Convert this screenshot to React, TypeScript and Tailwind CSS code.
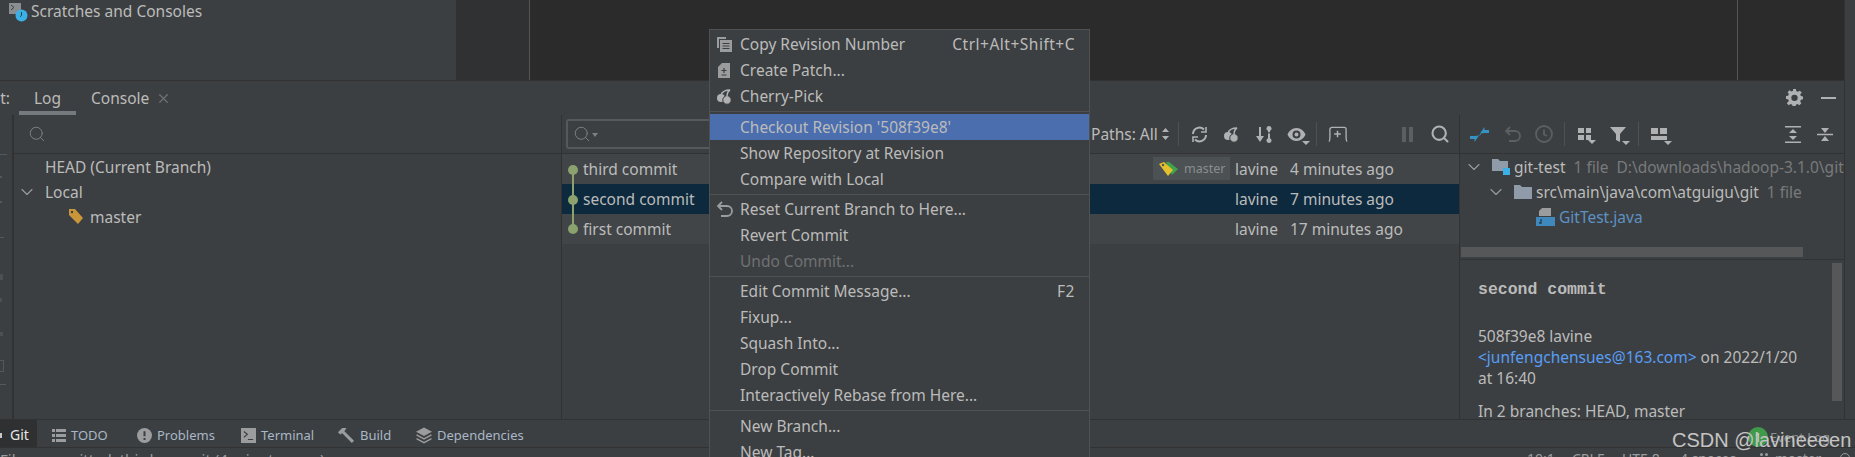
import React from 'react';
import { ChevronDown, Search, X } from 'lucide-react';

const Tag = () => (
  <svg width="16" height="17" viewBox="0 0 16 17">
    <path d="M1 1h6l8 9-5 6-9-9z" fill="#c9973a" />
    <circle cx="4" cy="4" r="1.2" fill="#3c3f41" />
  </svg>
);

const Sep = ({ short }: { short?: boolean }) => (
  <div className={`${short ? 'h-[4px]' : 'h-[5px]'} flex items-center`}>
    <div className="h-px w-full bg-[#515151]" />
  </div>
);

type ItemProps = {
  label: string;
  shortcut?: string;
  icon?: React.ReactNode;
  active?: boolean;
  disabled?: boolean;
};

const Item = ({ label, shortcut, icon, active, disabled }: ItemProps) => (
  <div
    className={`h-[26px] flex items-center relative pl-[30px] pr-[14px] justify-between ${active ? 'bg-[#4b6eaf]' : ''} ${disabled ? 'text-[#6f7173]' : 'text-[#bbbbbb]'}`}
  >
    {icon && <span className="absolute left-[6px] top-[5px] flex">{icon}</span>}
    <span>{label}</span>
    {shortcut && <span className="tracking-[0.5px]">{shortcut}</span>}
  </div>
);

const CopyIcon = () => (
  <svg width="17" height="17" viewBox="0 0 17 17" fill="none">
    <path d="M1 1h9v2H3v9H1z" fill="#9a9c9e" />
    <rect x="4" y="4" width="12" height="12" fill="#9a9c9e" />
    <path d="M6.500 7.500h7M6.500 10h7M6.500 12.500h7" stroke="#3c3f41" />
  </svg>
);

const PatchIcon = () => (
  <svg width="17" height="17" viewBox="0 0 17 17">
    <path d="M6 1h8v15H2V5z" fill="#9a9c9e" />
    <path d="M8 6v5M5.500 8.500h5M5.500 13h5" stroke="#3c3f41" strokeWidth="1.200" />
  </svg>
);

const CherryIcon = () => (
  <svg width="17" height="17" viewBox="0 0 17 17" fill="none">
    <circle cx="5" cy="10" r="4" fill="#afb1b3" />
    <circle cx="11" cy="12" r="4.200" fill="#afb1b3" stroke="#3c3f41" />
    <path d="M5 7c1-3 4-5 9-5-2 1-3 4-3 7" stroke="#afb1b3" strokeWidth="1.500" />
  </svg>
);

const ResetIcon = ({ color = '#9a9c9e' }: { color?: string }) => (
  <svg width="17" height="17" viewBox="0 0 17 17" fill="none">
    <path d="M6 1 2 5l4 4" stroke={color} strokeWidth="1.800" />
    <path d="M3 5h8a4.500 4.500 0 0 1 0 10H5" stroke={color} strokeWidth="1.800" />
  </svg>
);

const Caret = () => (
  <span className="absolute -right-[4px] -bottom-[3px] w-0 h-0 border-l-[4px] border-r-[4px] border-t-[4px] border-l-transparent border-r-transparent border-t-[#afb1b3]" />
);

const Chevron = ({ className }: { className: string }) => (
  <ChevronDown size={20} strokeWidth={1.300} className={`flex-none text-[#9a9c9e] ${className}`} />
);

const Divider = ({ className }: { className: string }) => <div className={`w-px h-[24px] flex-none bg-[#515151] ${className}`} />;

type LogRowProps = { title: string; date: string; selected?: boolean; odd?: boolean; badge?: boolean };

const LogRow = ({ title, date, selected, odd, badge }: LogRowProps) => (
  <div className={`h-[30px] pb-px flex items-center ${selected ? 'bg-[#0d293e]' : odd ? 'bg-[#414547]' : ''}`}>
    <span className="ml-[21px] flex-1 text-[#bbbbbb]">{title}</span>
    {badge && (
      <div className="h-[23px] w-[77px] mr-[5px] flex items-center gap-[5px] pl-[5px] bg-[#4c5153] text-[12.5px] text-[#8a8d8f]">
        <svg width="21" height="16" viewBox="0 0 21 16" className="flex-none">
          <path d="M8 1h3l9 7-6 6z" fill="#3fa24d" />
          <path d="M1 3l5-2 9 8-5 6z" fill="#e5c02d" />
          <circle cx="5" cy="4" r="1.200" fill="#4c5153" />
        </svg>
        <span>master</span>
      </div>
    )}
    <span className="w-[55px] text-[#bbbbbb]">lavine</span>
    <span className="w-[169px] text-[#bbbbbb]">{date}</span>
  </div>
);

const CommitGraph = () => (
  <div className="absolute left-[6px] top-[11px] w-[10px] h-[69px] flex flex-col items-center justify-between">
    <span className="absolute top-[2px] bottom-[2px] w-[2px] bg-[#8ba26e]" />
    <span className="relative w-[10px] h-[10px] rounded-full bg-[#8ba26e]" />
    <span className="relative w-[10px] h-[10px] rounded-full bg-[#8ba26e]" />
    <span className="relative w-[10px] h-[10px] rounded-full bg-[#8ba26e]" />
  </div>
);

const Stripe = ({ icon, label, width }: { icon: React.ReactNode; label: string; width: string }) => (
  <div className={`flex items-center gap-[5px] ${width} text-[#a9b7c6]`}>
    {icon}
    <span>{label}</span>
  </div>
);

export default function App() {
  return (
    <div className="font-['Noto_Sans',sans-serif] relative w-[1855px] h-[457px] overflow-hidden bg-[#3c3f41] text-[15.5px] leading-[20px] flex flex-col">
      <div className="h-[419px] flex-none flex">
        <div className="w-[1844px] flex-none flex flex-col">
          {/* top: project tree and editor */}
          <div className="h-[80px] flex-none flex">
            <div className="w-[456px] flex items-start pl-[9px] pt-px gap-[3px] text-[#bbbbbb]">
              <svg width="19" height="20" viewBox="0 0 19 20" className="flex-none mt-px">
                <rect x="0" y="1" width="12" height="11" fill="#8b8e90" />
                <path d="m2 3 3 2.500L2 8" stroke="#3c3f41" fill="none" />
                <circle cx="12.500" cy="13.500" r="6" fill="#3bb0e6" />
                <path d="M12.500 10v3.500l-1.500 1.200" stroke="#22414f" fill="none" />
              </svg>
              <span>Scratches and Consoles</span>
            </div>
            <div className="w-[73px] bg-[#303132]" />
            <div className="flex-1 bg-[#2b2b2b] border-l border-[#555555] flex justify-end">
              <div className="w-[107px] border-l border-[#555555]" />
            </div>
          </div>
          <div className="h-px flex-none bg-[#323232]" />

          {/* tool window header */}
          <div className="h-[34px] flex-none flex items-start text-[#bbbbbb]">
            <div className="w-[10px] overflow-hidden flex justify-end pt-[7px]"><span>Git:</span></div>
            <div className="ml-[9px] w-[57px] h-[34px] border-b-[4px] border-[#747a80] flex justify-center pt-[7px]">Log</div>
            <div className="ml-[15px] flex items-center gap-[7px] pt-[7px]">
              <span>Console</span>
              <X size={15} className="text-[#6e7072]" />
            </div>
            <div className="ml-auto mr-[8px] flex items-center gap-[18px] pt-[8px]">
              <svg width="17" height="17" viewBox="0 0 24 24" fill="#afb1b3">
                <path fillRule="evenodd" d="M10 0h4l.6 3 2.300 1 2.600-1.700 2.800 2.800L20 7.700l1 2.300 3 .6v4l-3 .6-1 2.300 1.700 2.600-2.800 2.800-2.600-1.700-2.300 1-.6 3h-4l-.6-3-2.300-1-2.600 1.700-2.800-2.800L4 16.900 3 14.600l-3-.6v-4l3-.6 1-2.300L2.300 4.500l2.800-2.800L7.700 3.400 10 2.400zM12 8a4.500 4.500 0 1 0 0 9 4.500 4.500 0 0 0 0-9z" />
              </svg>
              <div className="w-[15px] h-[2px] bg-[#afb1b3]" />
            </div>
          </div>

          {/* tool window body */}
          <div className="flex-1 flex min-h-0">
            <div className="w-[14px] flex-none border-r-2 border-[#323232] flex flex-col items-start pt-[39px]">
              <div className="w-[7px] h-px bg-[#55585a]" />
              <div className="mt-[21px] w-[2px] h-[2px] bg-[#55585a]" />
              <div className="mt-[23px] w-[2px] h-[2px] bg-[#55585a]" />
              <div className="mt-[34px] w-[4px] h-px bg-[#55585a]" />
              <div className="mt-[36px] w-[3px] h-[6px] bg-[#4d5052]" />
              <div className="mt-[18px] w-[2px] h-[4px] bg-[#4d5052]" />
              <div className="mt-[30px] w-[3px] h-[4px] bg-[#4d5052]" />
              <div className="mt-[24px] w-[4px] h-[12px] border-r border-y border-[#55585a]" />
              <div className="mt-[12px] w-[6px] h-px bg-[#55585a]" />
            </div>

            {/* branches */}
            <div className="w-[548px] flex-none flex flex-col border-r border-[#323232]">
              <div className="h-[39px] border-b border-[#323232] flex items-center pl-[14px]">
                <Search size={18} strokeWidth={1.300} className="text-[#7d7f81]" />
              </div>
              <div className="text-[#bbbbbb]">
                <div className="h-[25px] pl-[31px] flex items-center">HEAD (Current Branch)</div>
                <div className="h-[25px] flex items-center">
                  <Chevron className="ml-[3px] mr-[8px]" />
                  Local
                </div>
                <div className="h-[25px] flex items-center pl-[54px] gap-[6px]">
                  <Tag />
                  master
                </div>
              </div>
            </div>

            {/* commits */}
            <div className="w-[898px] flex-none flex flex-col border-r border-[#323232]">
              <div className="h-[39px] flex-none border-b border-[#323232] flex items-center">
                <div className="ml-[4px] w-[230px] h-[30px] flex-none border-2 border-[#56595b] rounded-[3px] flex items-center pl-[5px]">
                  <Search size={18} strokeWidth={1.300} className="text-[#7d7f81]" />
                  <span className="ml-px mt-[2px] w-0 h-0 border-l-[3px] border-r-[3px] border-t-[4px] border-l-transparent border-r-transparent border-t-[#7d7f81]" />
                </div>
                <div className="ml-[295px] w-[87px] flex-none flex items-center text-[#bbbbbb] gap-[4px]">
                  <span>Paths: All</span>
                  <svg width="7" height="12" viewBox="0 0 7 12" fill="#afb1b3">
                    <path d="M3.500 0 7 4H0zM3.500 12 0 8h7z" />
                  </svg>
                </div>
                <Divider className="" />
                <div className="ml-[12px] flex items-center">
                  <svg width="17" height="17" viewBox="0 0 17 17" fill="none" stroke="#afb1b3" strokeWidth="2">
                    <path d="M2 8a6.500 6.500 0 0 1 11-4.500M15 9a6.500 6.500 0 0 1-11 4.500" />
                    <path d="M10 6h5V1M7 11H2v5" strokeWidth="1.600" />
                  </svg>
                  <span className="ml-[15px] flex"><CherryIcon /></span>
                  <svg width="17" height="17" viewBox="0 0 17 17" fill="#afb1b3" className="ml-[16px]">
                    <path d="M3 1h2v9h3l-4 6-4-6h3z" />
                    <path d="M13 0a2.500 2.500 0 0 1 1 4.800v1.400h-2V4.800A2.500 2.500 0 0 1 13 0zM12 7.500h2v4.700a2.500 2.500 0 1 1-2 0z" />
                  </svg>
                  <span className="relative ml-[14px] flex">
                    <svg width="19" height="15" viewBox="0 0 19 15">
                      <path fillRule="evenodd" d="M9.500 1C14 1 17 4 18.500 7.500 17 11 14 14 9.500 14S2 11 .500 7.500C2 4 5 1 9.500 1zm0 2.500a4 4 0 1 0 0 8 4 4 0 0 0 0-8zm0 2a2 2 0 1 1 0 4 2 2 0 0 1 0-4z" fill="#afb1b3" />
                    </svg>
                    <Caret />
                  </span>
                </div>
                <Divider className="ml-[10px]" />
                <svg width="20" height="17" viewBox="0 0 21 17" fill="none" stroke="#afb1b3" strokeWidth="1.400" className="ml-[11px] flex-none">
                  <path d="M1 16c1-1 1-2 1-4V3c0-1 1-2 2-2h13c1 0 2 1 2 2v9c0 2 0 3 1 4" />
                  <path d="M6.500 8h7M10 4.500v7" strokeWidth="1.600" />
                </svg>
                <div className="ml-[54px] flex gap-[3px] flex-none">
                  <div className="w-[4px] h-[15px] bg-[#5c5f61]" />
                  <div className="w-[4px] h-[15px] bg-[#5c5f61]" />
                </div>
                <Search size={20} strokeWidth={2.500} className="ml-[17px] flex-none text-[#afb1b3]" />
              </div>
              <div className="relative">
                <LogRow title="third commit" date="4 minutes ago" odd badge />
                <LogRow title="second commit" date="7 minutes ago" selected />
                <LogRow title="first commit" date="17 minutes ago" odd />
                <CommitGraph />
              </div>
            </div>

            {/* changes / details */}
            <div className="flex-1 min-w-0 flex flex-col">
              <div className="h-[39px] flex-none border-b border-[#323232] flex items-center pl-[10px]">
                <svg width="19" height="17" viewBox="0 0 19 17" fill="#3592c4" className="flex-none">
                  <path d="M10 7.500 14.500 1v3H19v3h-4.500zM9 9.500 4.500 16v-3H0v-3h4.500z" />
                  <path d="m11 7.500-1.500 2" stroke="#3592c4" fill="none" />
                </svg>
                <span className="ml-[15px] flex"><ResetIcon color="#5c5f61" /></span>
                <svg width="18" height="18" viewBox="0 0 18 18" fill="none" stroke="#5c5f61" strokeWidth="1.800" className="ml-[14px] flex-none">
                  <circle cx="9" cy="9" r="8" />
                  <path d="M9 4.500V9.500l3 1.500" />
                </svg>
                <Divider className="ml-[11px]" />
                <span className="relative ml-[13px] flex">
                  <svg width="14" height="14" viewBox="0 0 14 14" fill="#afb1b3">
                    <path d="M0 1h6v5H0zM8 1h5v5H8zM0 8h6v5H0zM8 8h5v5H8z" />
                  </svg>
                  <Caret />
                </span>
                <span className="relative ml-[18px] flex">
                  <svg width="16" height="15" viewBox="0 0 16 15" fill="#afb1b3">
                    <path d="M0 0h16L10 7v8l-4-2V7z" />
                  </svg>
                  <Caret />
                </span>
                <Divider className="ml-[12px]" />
                <span className="relative ml-[12px] flex">
                  <svg width="17" height="15" viewBox="0 0 17 15" fill="#afb1b3">
                    <path d="M0 1h7v6H0zM9 1h7v6H9zM0 9h16v4H0z" />
                  </svg>
                  <Caret />
                </span>
                <div className="ml-auto mr-[11px] flex gap-[16px]">
                  <svg width="16" height="17" viewBox="0 0 16 17" fill="#afb1b3">
                    <path d="M0 0h16v1.500H0zM0 15.500h16V17H0zM8 3l4 4H4zM8 14l-4-4h8z" />
                  </svg>
                  <svg width="16" height="17" viewBox="0 0 16 17" fill="#afb1b3">
                    <path d="M0 7.800h16v1.500H0zM8 7 4 2h8zM8 10l4 5H4z" />
                  </svg>
                </div>
              </div>

              <div className="h-[105px] flex-none relative text-[#bbbbbb] whitespace-nowrap overflow-hidden">
                <div className="h-[25px] flex items-center">
                  <Chevron className="ml-[4px] mr-[7px]" />
                  <svg width="19" height="19" viewBox="0 0 19 19" className="mr-[4px] flex-none">
                    <path d="M1 2h6l2 2h8v10H1z" fill="#8f9ba8" />
                    <rect x="12" y="11" width="7" height="7" fill="#3bb0e6" />
                  </svg>
                  <span>git-test</span>
                  <span className="ml-[8px] text-[#787a7c]">1 file</span>
                  <span className="ml-[8px] text-[#787a7c]">D:\downloads\hadoop-3.1.0\git</span>
                </div>
                <div className="h-[25px] flex items-center">
                  <Chevron className="ml-[26px] mr-[8px]" />
                  <svg width="18" height="15" viewBox="0 0 18 15" className="mr-[4px] flex-none">
                    <path d="M0 1h6l2 2h10v12H0z" fill="#8f9ba8" />
                  </svg>
                  <span>src\main\java\com\atguigu\git</span>
                  <span className="ml-[8px] text-[#787a7c]">1 file</span>
                </div>
                <div className="h-[25px] flex items-center pl-[76px] gap-[4px] text-[#5c92c4]">
                  <svg width="19" height="19" viewBox="0 0 19 19" className="flex-none">
                    <path d="M6 1h9v8H3V4z" fill="#9a9c9e" />
                    <rect x="0" y="10" width="19" height="9" fill="#3f88bd" />
                    <path d="M5 12v4H3" stroke="#243b4d" strokeWidth="1.300" fill="none" />
                  </svg>
                  <span>GitTest.java</span>
                </div>
                <div className="absolute left-px top-[93px] w-[342px] h-[10px] bg-[#565758]" />
              </div>

              <div className="flex-1 min-h-0 relative border-t border-[#323232] pl-[18px] pt-[20px] text-[#bbbbbb] overflow-hidden">
                <div className="font-['Liberation_Mono',monospace] font-bold text-[16.5px] text-[#bbbbbb]">second commit</div>
                <div className="mt-[26px] leading-[21px] whitespace-nowrap">
                  508f39e8 lavine
                  <br />
                  <span className="text-[#589df6]">&lt;junfengchensues@163.com&gt;</span> on 2022/1/20
                  <br />
                  at 16:40
                </div>
                <div className="mt-[12px] leading-[21px]">In 2 branches: HEAD, master</div>
                <div className="absolute right-[2px] top-[3px] w-[10px] h-[138px] bg-[#565758]" />
              </div>
            </div>
          </div>
        </div>
        <div className="flex-1 border-l border-[#323232]" />
      </div>

      {/* bottom tool stripe */}
      <div className="h-[28px] flex-none border-t border-[#323232] flex items-center text-[13px]">
        <div className="w-[37px] h-full flex-none bg-[#2f3031] flex items-center pt-[3px] text-[#e6e6e6] text-[14px]">
          <span className="w-[2px] h-[5px] bg-[#c8c8c8]" />
          <span className="ml-[8px]">Git</span>
        </div>
        <div className="ml-[15px] pt-[3px] flex items-center">
          <Stripe
            width="w-[85px]"
            label="TODO"
            icon={
              <svg width="14" height="13" viewBox="0 0 14 13" fill="#9a9c9e">
                <path d="M0 0h3v3H0zM4 0h10v3H4zM0 5h3v3H0zM4 5h10v3H4zM0 10h3v3H0zM4 10h10v3H4z" />
              </svg>
            }
          />
          <Stripe
            width="w-[104px]"
            label="Problems"
            icon={
              <svg width="15" height="15" viewBox="0 0 12 12">
                <circle cx="6" cy="6" r="6" fill="#9a9c9e" />
                <path d="M6 2.500v4M6 8v1.500" stroke="#3c3f41" strokeWidth="1.600" />
              </svg>
            }
          />
          <Stripe
            width="w-[96px]"
            label="Terminal"
            icon={
              <svg width="15" height="15" viewBox="0 0 13 13">
                <rect width="13" height="13" fill="#9a9c9e" />
                <path d="m2.500 3 3 2.500-3 2.500M6 10h4.500" stroke="#3c3f41" fill="none" />
              </svg>
            }
          />
          <Stripe
            width="w-[79px]"
            label="Build"
            icon={
              <svg width="18" height="15" viewBox="0 0 15 14" fill="#9a9c9e">
                <path d="M0 4 4 0h4L6 3l9 9-2 2-9-9-2 1z" />
              </svg>
            }
          />
          <Stripe
            width="w-[110px]"
            label="Dependencies"
            icon={
              <svg width="16" height="17" viewBox="0 0 15 15" fill="none">
                <path d="M7.500 0 15 4l-7.500 4L0 4z" fill="#9a9c9e" />
                <path d="m.500 7 7 3.700 7-3.700M.500 10.500l7 3.700 7-3.700" stroke="#9a9c9e" strokeWidth="1.300" />
              </svg>
            }
          />
        </div>
      </div>

      {/* status bar, cut off by the window edge */}
      <div className="h-[10px] flex-none border-t border-[#323232] overflow-hidden flex text-[#9a9c9e] whitespace-nowrap">
        <span className="text-[15px] mt-px">Files committed: third commit (4 minutes ago)</span>
        <div className="ml-auto w-[328px] flex text-[14px] mt-px">
          <span className="w-[45px]">10:1</span>
          <span className="w-[50px]">CRLF</span>
          <span className="w-[58px]">UTF-8</span>
          <span className="w-[80px]">4 spaces</span>
          <span className="w-[15px] flex gap-[2px]"><i className="w-[3px] h-[3px] rounded-full bg-[#9a9c9e] mt-[4px]" /><i className="w-[3px] h-[3px] rounded-full bg-[#9a9c9e] mt-[4px]" /></span>
          <span className="w-[65px]">master</span>
          <span className="w-[10px] h-[10px] mt-[4px] rounded-t-full border border-[#9a9c9e]" />
        </div>
      </div>

      {/* context menu */}
      <div className="absolute left-[709px] top-[29px] w-[381px] h-[440px] bg-[#3c3f41] border border-[#515151] pt-px">
        <Item label="Copy Revision Number" shortcut="Ctrl+Alt+Shift+C" icon={<CopyIcon />} />
        <Item label="Create Patch..." icon={<PatchIcon />} />
        <Item label="Cherry-Pick" icon={<CherryIcon />} />
        <Sep />
        <Item label="Checkout Revision '508f39e8'" active />
        <Item label="Show Repository at Revision" />
        <Item label="Compare with Local" />
        <Sep short />
        <Item label="Reset Current Branch to Here..." icon={<ResetIcon />} />
        <Item label="Revert Commit" />
        <Item label="Undo Commit..." disabled />
        <Sep short />
        <Item label="Edit Commit Message..." shortcut="F2" />
        <Item label="Fixup..." />
        <Item label="Squash Into..." />
        <Item label="Drop Commit" />
        <Item label="Interactively Rebase from Here..." />
        <Sep />
        <Item label="New Branch..." />
        <Item label="New Tag..." />
      </div>

      {/* event log + watermark */}
      <div className="absolute left-[1748px] top-[427px] w-[20px] h-[20px] rounded-full bg-[#3f9a4a] flex items-center justify-center text-[13px] text-[#cccccc]">1</div>
      <span className="absolute left-[1770px] top-[427px] text-[13px] text-[#8d8f91]">Event Log</span>
      <span className="absolute left-[1672px] top-[429px] text-[20px] leading-[23px] text-[#c4c4c4] font-['Liberation_Sans',sans-serif]">CSDN @lavineeeen</span>
    </div>
  );
}
